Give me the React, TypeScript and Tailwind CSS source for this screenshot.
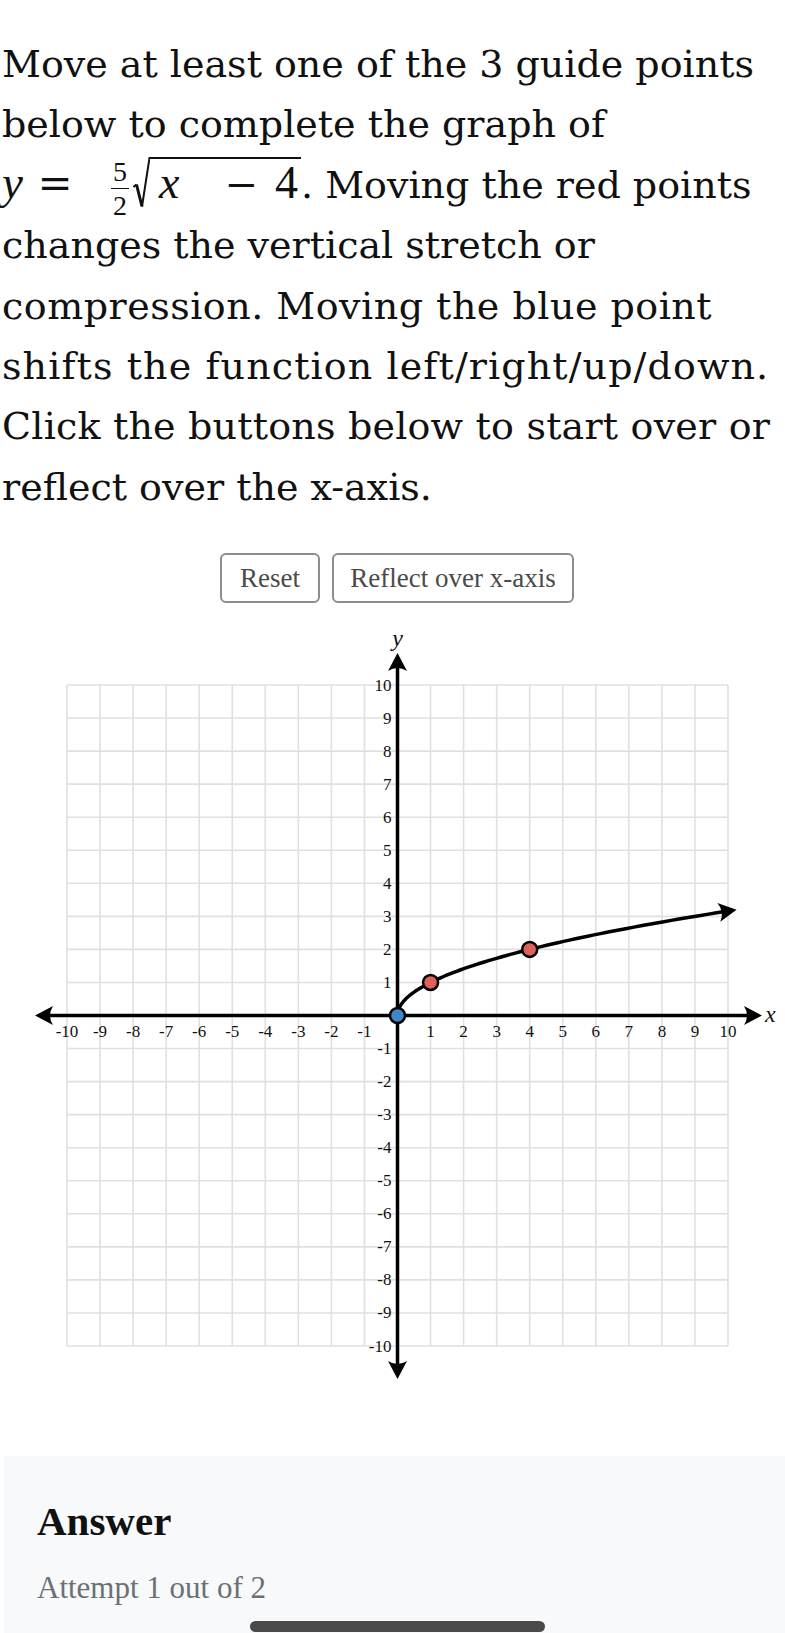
const U = 33.05;
const OX = 397.5;
const OY = 1015.5;
const px = (x: number) => OX + x * U;
const py = (y: number) => OY - y * U;

const ticks = Array.from({ length: 21 }, (_, i) => i - 10);

function Arrow({ x, y, angle }: { x: number; y: number; angle: number }) {
  return (
    <path
      d="M0 0 L-18 -9.5 Q-12 0 -18 9.5 Z"
      transform={`translate(${x} ${y}) rotate(${angle})`}
      fill="#000"
    />
  );
}

function curvePath() {
  const end = Math.sqrt(9.9);
  const pts: string[] = [];
  for (let i = 0; i <= 80; i++) {
    const s = (end * i) / 80;
    pts.push(`${px(s * s).toFixed(2)} ${py(s).toFixed(2)}`);
  }
  return "M" + pts.join(" L");
}

function Graph() {
  const tipX = 10.26;
  const angle = (Math.atan(-1 / (2 * Math.sqrt(tipX))) * 180) / Math.PI;
  return (
    <svg width="785" height="797" viewBox="0 603 785 797" className="block">
      {ticks.map((t) => (
        <g key={t} stroke="#e0e0e0" strokeWidth="1.6">
          <line x1={px(t)} y1={py(10)} x2={px(t)} y2={py(-10)} />
          <line x1={px(-10)} y1={py(t)} x2={px(10)} y2={py(t)} />
        </g>
      ))}

      <line x1={48} y1={OY} x2={750} y2={OY} stroke="#000" strokeWidth="3.5" />
      <line x1={OX} y1={665} x2={OX} y2={1367} stroke="#000" strokeWidth="3.5" />
      <Arrow x={762} y={OY} angle={0} />
      <Arrow x={35} y={OY} angle={180} />
      <Arrow x={OX} y={653} angle={-90} />
      <Arrow x={OX} y={1379} angle={90} />

      <g fontFamily="'Liberation Serif', serif" fontSize="17" fill="#111">
        {ticks
          .filter((t) => t !== 0)
          .map((t) => (
            <text key={`x${t}`} x={px(t)} y={OY + 21} textAnchor="middle">
              {t}
            </text>
          ))}
        {ticks
          .filter((t) => t !== 0)
          .map((t) => (
            <text key={`y${t}`} x={OX - 6} y={py(t) + 5.5} textAnchor="end">
              {t}
            </text>
          ))}
      </g>
      <text x={765} y={1022} fontFamily="'Liberation Serif', serif" fontStyle="italic" fontSize="24" fill="#111">
        x
      </text>
      <text x={OX} y={646} textAnchor="middle" fontFamily="'Liberation Serif', serif" fontStyle="italic" fontSize="24" fill="#111">
        y
      </text>

      <path d={curvePath()} fill="none" stroke="#000" strokeWidth="3.5" strokeLinecap="round" />
      <Arrow x={px(tipX)} y={py(Math.sqrt(tipX))} angle={angle} />

      <circle cx={px(1)} cy={py(1)} r="7.5" fill="#e0605c" stroke="#000" strokeWidth="2.5" />
      <circle cx={px(4)} cy={py(2)} r="7.5" fill="#e0605c" stroke="#000" strokeWidth="2.5" />
      <circle cx={OX} cy={OY} r="7.5" fill="#3f86cc" stroke="#000" strokeWidth="2.5" />
    </svg>
  );
}

function MathLine() {
  return (
    <div className="h-[60.4px]">
      <span className="inline-block w-[32px] font-['Liberation_Serif',serif] text-[47px] leading-none italic">y</span>
      <span className="ml-[3px] inline-block w-[36px] text-center text-[42px] leading-none">=</span>
      <span className="ml-[34px] inline-flex w-[26px] flex-col items-center align-middle font-['Liberation_Serif',serif] text-[28px]">
        <span className="leading-[31px]">5</span>
        <span className="my-[1px] h-[1.5px] w-[18px] bg-[#111]" />
        <span className="leading-[31px]">2</span>
      </span>
      <span className="relative inline-block pl-[17px] font-['Liberation_Serif',serif] text-[46px] leading-none">
        <svg className="absolute left-0 top-0" width="17" height="52" viewBox="0 0 17 52">
          <path d="M0.5 30 L3.5 27.5" stroke="#111" strokeWidth="2" fill="none" />
          <path d="M3.5 27.5 L9 49.5" stroke="#111" strokeWidth="3" fill="none" />
          <path d="M9 49.5 L16.5 1 L17 1" stroke="#111" strokeWidth="2" fill="none" />
        </svg>
        <span className="inline-block border-t-2 border-[#111] pr-[2px] pt-[1px]">
          <span className="inline-block w-[58px] pl-[9px] italic">x</span>
          <span className="inline-block w-[67px] text-center font-['DejaVu_Serif',serif] text-[40px]">−</span>
          <span className="inline-block w-[24px]">4</span>
        </span>
      </span>
      <span>. Moving the red points</span>
    </div>
  );
}

export default function App() {
  return (
    <div className="min-h-screen bg-white font-['DejaVu_Serif',serif] text-[#111]">
      <div className="whitespace-nowrap pl-[2px] pt-[34px] text-[38px] leading-[60.4px]">
        <div>Move at least one of the 3 guide points</div>
        <div>below to complete the graph of</div>
        <MathLine />
        <div>changes the vertical stretch or</div>
        <div className="tracking-[0.5px]">compression. Moving the blue point</div>
        <div className="tracking-[1.1px]">shifts the function left/right/up/down.</div>
        <div className="tracking-[0.2px]">Click the buttons below to start over or</div>
        <div>reflect over the x-axis.</div>
      </div>

      <div className="mt-[36px] flex justify-center gap-3 pl-[9px] font-['Liberation_Serif',serif] text-[27px] text-[#4a4a4a]">
        <button className="h-[50px] w-[100px] rounded-[6px] border-2 border-[#8c8c8c] bg-white">Reset</button>
        <button className="h-[50px] w-[242px] rounded-[6px] border-2 border-[#8c8c8c] bg-white">
          Reflect over x-axis
        </button>
      </div>

      <Graph />

      <section className="ml-[4px] mt-[56px] bg-[#f8f9fa] pb-[20px] pl-[33px] pt-[45px] font-['Liberation_Serif',serif]">
        <h2 className="text-[41px] font-bold leading-none text-[#111]">Answer</h2>
        <p className="mt-[30px] text-[31px] leading-none text-[#6b6f76]">Attempt 1 out of 2</p>
        <div className="ml-[213px] mt-[18px] h-[11px] w-[295px] rounded-full bg-[#4a4a4a]" />
      </section>
    </div>
  );
}
